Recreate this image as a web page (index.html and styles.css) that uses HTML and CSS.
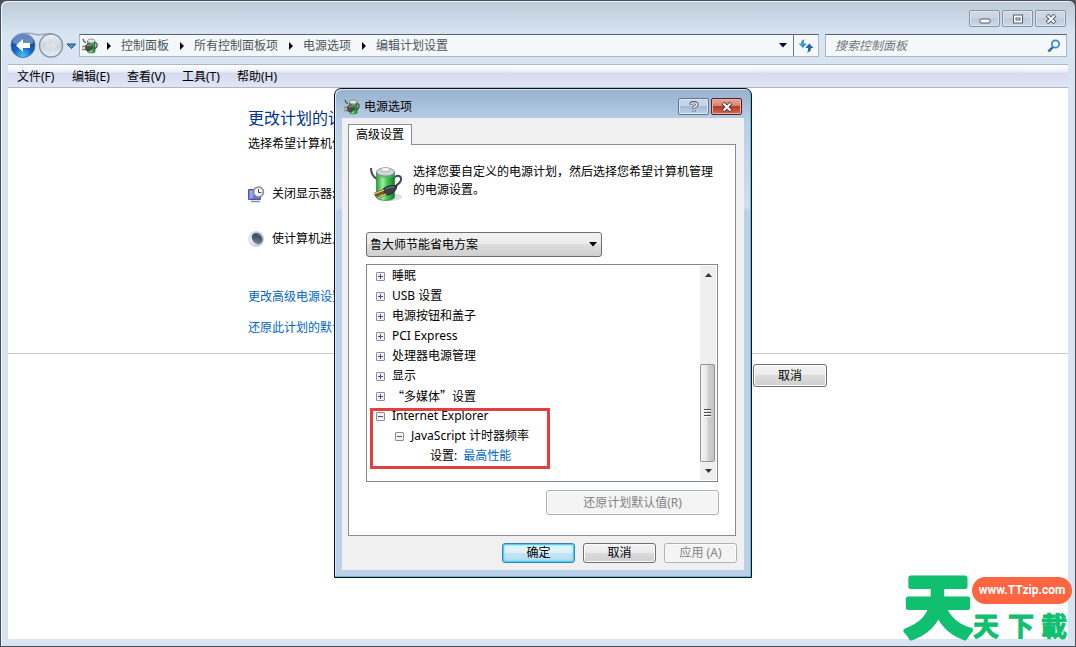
FILE: index.html
```html
<!DOCTYPE html>
<html lang="zh-CN">
<head>
<meta charset="utf-8">
<title>编辑计划设置</title>
<link rel="stylesheet" href="styles.css">
</head>
<body>
<svg class="defs" aria-hidden="true">
  <defs>
    <linearGradient id="green" x1="0" x2="1" y1="0" y2="0">
      <stop offset="0" stop-color="#2f9a3c"/><stop offset=".35" stop-color="#9af09a"/>
      <stop offset=".6" stop-color="#3fc653"/><stop offset="1" stop-color="#157a2a"/>
    </linearGradient>
    <radialGradient id="back" cx=".5" cy=".95" r=".9">
      <stop offset="0" stop-color="#3fd0ff"/><stop offset=".45" stop-color="#1a62c4"/><stop offset="1" stop-color="#123a8c"/>
    </radialGradient>
    <linearGradient id="fwd" x1="0" x2="0" y1="0" y2="1">
      <stop offset="0" stop-color="#eef2f6"/><stop offset=".5" stop-color="#ccd5df"/><stop offset="1" stop-color="#e6edf4"/>
    </linearGradient>
    <radialGradient id="moon" cx=".3" cy=".5" r=".7">
      <stop offset="0" stop-color="#ffffff"/><stop offset="1" stop-color="#a4b4cc"/>
    </radialGradient>
    <linearGradient id="night" x1="0" x2="1" y1="1" y2="0">
      <stop offset="0" stop-color="#8795ae"/><stop offset=".6" stop-color="#465064"/><stop offset="1" stop-color="#56627a"/>
    </linearGradient>
    <symbol id="power-small" viewBox="0 0 16 16">
      <path d="M5.500 3v10.500c0 2 7.500 2 7.500 0V3z" fill="url(#green)" stroke="#2b7a38" stroke-width=".7"/>
      <ellipse cx="9.200" cy="3" rx="3.800" ry="2" fill="#e3e8e6" stroke="#6d7773" stroke-width=".7"/>
      <path d="M13 4.500c3 .5 3 5-1 6.500M1 .8c.3 2 1 3 3 4" fill="none" stroke="#4a4d55" stroke-width="1.200"/>
      <path d="M3.500 7.500 8 5.500l2.500 2.500v2.500L7.500 13l-4-1z" fill="#4b4c50" stroke="#232427" stroke-width=".6"/>
      <path d="M5 8 8 6.800l1.500 1.200" fill="none" stroke="#aeb0b5"/>
      <path d="M0 8.500h3.500M0 11.500h3.500" stroke="#9c8344" stroke-width="1.400"/>
    </symbol>
  </defs>
</svg>

<main class="window">
  <header class="caption">
    <button class="cap-btn" aria-label="最小化"><svg width="12" height="10"><rect x="1" y="5" width="10" height="4" rx="1" fill="#fff" stroke="#555b6a"/></svg></button>
    <button class="cap-btn" aria-label="最大化"><svg width="12" height="10"><rect x="1.500" y="1" width="9" height="8" fill="#fff" stroke="#555b6a"/><rect x="4" y="4" width="4" height="2" fill="#fff" stroke="#555b6a"/></svg></button>
    <button class="cap-btn" aria-label="关闭"><svg width="12" height="10"><path d="m2 1 8 8M10 1 2 9" stroke="#555b6a" stroke-width="4"/><path d="m2.500 1.500 7 7M9.500 1.500l-7 7" stroke="#fff" stroke-width="2"/></svg></button>
  </header>

  <div class="toolbar">
    <svg class="travel" width="68" height="27" viewBox="0 0 68 27">
      <path d="M15 1.500c8-1 14 1.500 16 1.500s7-2 13-1" fill="none" stroke="#9eaab9" stroke-width="1.500"/>
      <circle cx="15" cy="13.500" r="12" fill="url(#back)" stroke="#5d6f8d"/>
      <path d="M4.500 11a10.500 10.500 0 0 1 21 0c-6 2-15 2-21 0z" fill="#a7bfe2" opacity=".55"/>
      <path d="m8 13.500 7-6.500v4h7v5h-7v4z" fill="#fff"/>
      <circle cx="43" cy="13.500" r="11.500" fill="url(#fwd)" stroke="#8492a4" stroke-width="1.400"/>
      <path d="m50 13.500-7-6v4h-6v4h6v4z" fill="#dde3e9" stroke="#ced5dd" stroke-width=".7"/>
      <path d="M59 12h8.500l-4 4.500z" fill="#4b9bdc" stroke="#28466f"/>
    </svg>
    <div class="address">
      <svg class="addr-icon" width="16" height="16"><use href="#power-small"/></svg>
      <nav class="crumbs" aria-label="位置">
        <i class="arrow"></i><a href="#">控制面板</a>
        <i class="arrow"></i><a href="#">所有控制面板项</a>
        <i class="arrow"></i><a href="#">电源选项</a>
        <i class="arrow"></i><a href="#">编辑计划设置</a>
      </nav>
      <button class="addr-btn" aria-label="历史位置"><svg width="8" height="5"><path d="M0 0h8L4 4.500z" fill="#00004a"/></svg></button>
      <button class="addr-btn refresh" aria-label="刷新"><svg width="16" height="14" viewBox="0 0 16 14"><path d="M6.500.5C3.500 1 3 2.500 3 4.500H.5L5 9l4-4.500H6c0-2 0-3 .5-4z" fill="#3f97d8"/><path d="M9 13.500c3.500-.5 4-2.500 4-4.500h2.500L11.300 4.500 7.300 9H10c0 2 0 3-1 4.500z" fill="#2864ac"/></svg></button>
    </div>
    <label class="search">
      <input type="search" placeholder="搜索控制面板" aria-label="搜索控制面板">
      <svg width="14" height="14" viewBox="0 0 14 14"><path d="m1.500 12.500 4.500-4.500" stroke="#2a5ea8" stroke-width="2.400"/><circle cx="8.500" cy="5" r="3.700" fill="#eef7fd" stroke="#3b86c8" stroke-width="1.700"/></svg>
    </label>
  </div>

  <div class="menubar">
    <button>文件(F)</button><button>编辑(E)</button><button>查看(V)</button><button>工具(T)</button><button>帮助(H)</button>
  </div>

  <section class="page">
    <div class="plan">
      <h1>更改计划的设</h1>
      <p>选择希望计算机使</p>
      <div class="option">
        <svg width="17" height="17" viewBox="0 0 17 17"><path d="M.5 3.500h12v10H.5z" fill="#6272cf" stroke="#4a55ae"/><path d="M1.500 4.500h5l-2 8h-3z" fill="#98a5ed"/><path d="M3 15.500h9" stroke="#8b8fa3" stroke-width="1.500"/><circle cx="10.500" cy="6" r="5" fill="#f3f5f7" stroke="#858c95" stroke-width="1.600"/><path d="M10.500 3v3.500h3" fill="none" stroke="#444b55"/></svg>
        <span>关闭显示器:</span>
      </div>
      <div class="option">
        <svg width="17" height="17" viewBox="0 0 17 17"><circle cx="8" cy="8" r="7.800" fill="url(#moon)"/><ellipse cx="9" cy="7.500" rx="4.800" ry="6" transform="rotate(-40 9 7.500)" fill="url(#night)"/></svg>
        <span>使计算机进入</span>
      </div>
      <a class="link first" href="#">更改高级电源设置</a>
      <a class="link" href="#">还原此计划的默认</a>
    </div>
    <div class="actions"><button class="btn page-cancel">取消</button></div>
  </section>
</main>

<section class="dialog" role="dialog" aria-labelledby="dialog-title">
  <header class="dialog-head">
    <svg width="16" height="16"><use href="#power-small"/></svg>
    <h2 id="dialog-title">电源选项</h2>
    <button class="cap-btn help" aria-label="帮助"><svg width="10" height="12" viewBox="0 0 10 12"><path d="M2 4V2.500Q2 1.500 5 1.500T8 3.500Q8 5 5 6v2M5 9v2" fill="none" stroke="#525a69" stroke-width="3"/><path d="M2 3.500Q2 1.800 5 1.800T7.800 3.500Q8 5 5 6.200v1.300M5 9.300v1.400" fill="none" stroke="#fff" stroke-width="1.300"/></svg></button>
    <button class="cap-btn close" aria-label="关闭"><svg width="12" height="10"><path d="m2 1 8 8M10 1 2 9" stroke="#5b3a42" stroke-width="4"/><path d="m2.500 1.500 7 7M9.500 1.500l-7 7" stroke="#fff" stroke-width="2"/></svg></button>
  </header>
  <div class="client">
    <div role="tablist"><button class="tab" role="tab" aria-selected="true">高级设置</button></div>
    <div class="panel" role="tabpanel">
      <div class="intro">
        <svg width="36" height="38" viewBox="0 0 36 38">
          <ellipse cx="21" cy="32" rx="12" ry="4" fill="#dcdcdc"/>
          <path d="M2 3c0 6 2 9 6 11M25 13c3-4 8-2 7 2-1 4-4 5-7 7" fill="none" stroke="#454b60" stroke-width="2"/>
          <path d="M7.500 7v25c0 4.500 18 4.500 18 0V7z" fill="url(#green)" stroke="#31893c" stroke-width=".8"/>
          <path d="M7.500 11c4 3 14 3 18 0V7h-18z" fill="#54b663" opacity=".6"/>
          <ellipse cx="16.500" cy="7" rx="9" ry="4" fill="#cfd6dc" stroke="#78838c" stroke-width=".8"/>
          <ellipse cx="16.500" cy="4.500" rx="4.500" ry="2" fill="#f6f8f9" stroke="#929ba3" stroke-width=".7"/>
          <path d="M14 24c3-3 9-4 14-3-1 5-4 8-10 9l-4-2z" fill="#3d3e48" stroke="#23242b"/>
          <path d="M17 24c3-2 6-2 8-2" fill="none" stroke="#878a98"/>
          <path d="m5 29 10-4M9 33l8-4M6 31l9-4" stroke="#73571f" stroke-width="2.400"/>
          <path d="m5 29 10-4M9 33l8-4" stroke="#f1d896" stroke-width="1.200"/>
        </svg>
        <p>选择您要自定义的电源计划，然后选择您希望计算机管理的电源设置。</p>
      </div>
      <div class="plan-select">
        <select aria-label="电源计划"><option>鲁大师节能省电方案</option></select>
        <svg width="8" height="5"><path d="M0 0h8L4 4.500z"/></svg>
      </div>
      <div class="tree-box">
        <ul class="tree">
          <li><button class="toggle plus" aria-label="展开"></button>睡眠</li>
          <li><button class="toggle plus" aria-label="展开"></button>USB 设置</li>
          <li><button class="toggle plus" aria-label="展开"></button>电源按钮和盖子</li>
          <li><button class="toggle plus" aria-label="展开"></button>PCI Express</li>
          <li><button class="toggle plus" aria-label="展开"></button>处理器电源管理</li>
          <li><button class="toggle plus" aria-label="展开"></button>显示</li>
          <li class="cjk"><button class="toggle plus" aria-label="展开"></button>“多媒体”设置</li>
          <li><button class="toggle" aria-label="折叠"></button>Internet Explorer</li>
          <li class="level2"><button class="toggle" aria-label="折叠"></button>JavaScript 计时器频率</li>
          <li class="level3">设置:<a class="value" href="#">最高性能</a></li>
        </ul>
        <div class="scroll">
          <button aria-label="向上滚动"><svg width="7" height="4"><path d="M0 4h7L3.500 0z" fill="#333"/></svg></button>
          <div class="thumb"><i></i><i></i><i></i></div>
          <button aria-label="向下滚动"><svg width="7" height="4"><path d="M0 0h7L3.500 4z" fill="#333"/></svg></button>
        </div>
        <div class="highlight"></div>
      </div>
      <button class="btn restore" disabled>还原计划默认值(R)</button>
    </div>
    <footer class="dialog-foot">
      <button class="btn default">确定</button>
      <button class="btn">取消</button>
      <button class="btn" disabled>应用 (A)</button>
    </footer>
  </div>
</section>

<div class="brand">
  <svg class="brand-big" width="68" height="72" viewBox="0 0 68 72"><text x="34" y="59" text-anchor="middle">天</text></svg>
  <div class="brand-side">
    <span class="brand-url">www.TTzip.com</span>
    <svg class="brand-small" width="98" height="33" viewBox="0 0 98 33"><text x="1" y="24">天</text><text x="36" y="24">下</text><text x="69" y="24">載</text></svg>
  </div>
</div>
</body>
</html>
```
FILE: styles.css
```css
* { box-sizing: border-box; }

body {
  margin: 0;
  background: #4c4f57;
  color: #000;
  font: 12px/18px "Noto Sans", "Noto Sans CJK SC", sans-serif;
}

button, input, select { font: inherit; color: inherit; margin: 0; padding: 0; }
button { border: 0; background: none; }
h1, h2, p, ul { margin: 0; padding: 0; font-weight: normal; }
a { color: #0066cc; text-decoration: none; }
svg { display: block; flex: none; }
.defs { position: absolute; width: 0; height: 0; }

/* Main window */
.window {
  display: flex;
  flex-direction: column;
  min-height: 100vh;
  padding: 0 7px 7px;
  border: 1px solid #4c4f57;
  border-radius: 7px 7px 0 0;
  background: linear-gradient(#bccad9, #d8e5f2 34px, #d8e4f1 70px);
  box-shadow: inset 1px 1px 0 #eef4fa;
}

.caption {
  display: flex;
  justify-content: flex-end;
  gap: 2px;
  height: 33px;
  padding: 9px 2px 0 0;
}

.cap-btn {
  display: grid;
  place-items: center;
  width: 31px;
  height: 17px;
  border: 1px solid #8593a7;
  border-radius: 2px;
  background: linear-gradient(#cbd7e4 50%, #bdcbda 50%, #cbd8e5);
  box-shadow: inset 0 0 0 1px #dde7f0;
}

.toolbar { display: flex; align-items: center; height: 23px; }
.travel { margin: 0 3px 0 0; }

.address, .search {
  display: flex;
  align-items: center;
  height: 23px;
  border: 1px solid #a9b5c1;
  border-top-color: #59626b;
  background: #f4f8fb;
}
.address { flex: 1; }
.addr-icon { margin-left: 2px; }
.crumbs { display: flex; align-items: center; flex: 1; padding-left: 9px; }
.crumbs a { color: #4c545c; }
.arrow {
  margin: 0 10px 0 11px;
  border: 4px solid transparent;
  border-left-color: #000;
  border-right: 0;
}
.crumbs .arrow:first-child { margin-left: 0; }
.addr-btn { display: grid; place-items: center; width: 20px; height: 21px; }
.refresh { width: 25px; border-left: 1px solid #707982; }
.search { width: 242px; margin: 0 1px 0 6px; padding: 0 5px 0 9px; }
.search input { flex: 1; min-width: 0; border: 0; outline: 0; background: none; }
.search input::placeholder { color: #6e757c; font-style: italic; opacity: 1; }

.menubar {
  display: flex;
  gap: 1px;
  height: 24px;
  margin-top: 7px;
  padding: 2px 0 0 1px;
  border-top: 1px solid #adb9c6;
  border-bottom: 1px solid #adb6ca;
  background: linear-gradient(#fff, #e9edf7 7px, #d5daed 8px, #e1e5f5);
}
.menubar button { width: 54px; padding-left: 8px; text-align: left; white-space: nowrap; }

.page { flex: 1; background: #fff; }
.plan {
  display: flex;
  flex-direction: column;
  align-items: flex-start;
  height: 266px;
  padding: 18px 0 0 240px;
  border-bottom: 1px solid #ccc;
}
.plan h1 { font-size: 16px; line-height: 24px; color: #003399; }
.plan p { margin-top: 5px; margin-bottom: 32px; }
.option { display: flex; align-items: center; gap: 7px; height: 18px; margin-bottom: 27px; }
.link.first { margin: 13px 0; }
.actions { padding: 10px 0 0 745px; }

/* Push buttons */
.btn {
  width: 73px;
  height: 20px;
  border: 1px solid #707070;
  border-radius: 3px;
  background: linear-gradient(#f3f3f3, #ebebeb 50%, #dcdcdc 50%, #cfcfcf);
  box-shadow: inset 0 0 0 1px #fbfbfb;
  line-height: 18px;
}
.btn.page-cancel { width: 74px; height: 23px; }
.btn.default {
  border-color: #3c7fb1;
  background: linear-gradient(#eaf5fb, #dceffa 50%, #c5e4f5 50%, #b4dcf2);
  box-shadow: inset 0 0 0 1px #48d0f5, inset 0 0 2px 1px #48d0f5;
}
.btn:disabled { border-color: #adb2b5; background: #f4f4f4; color: #838383; }

/* Power options dialog */
.dialog {
  position: absolute;
  left: 334px;
  top: 88px;
  width: 418px;
  padding: 0 7px 7px;
  border: 1px solid #0a1016;
  border-radius: 7px 7px 0 0;
  background: linear-gradient(#97b0cd, #b8cfe8 32px, #cfdfef 118px, #b9d1ea 122px);
  box-shadow: inset -1px -1px 0 #4fc4d6, inset 1px 1px 0 #dbe8f4;
}
.dialog-head { display: flex; align-items: center; height: 29px; padding: 6px 2px 0 2px; }
.dialog-head h2 { flex: 1; margin-left: 4px; font-size: 12px; }
.cap-btn.help { margin-right: 2px; background: linear-gradient(#c6d6e9 50%, #a3bbd6 50%, #bdd2e8); border-color: #64758e; }
.cap-btn.close {
  border-color: #55202a;
  background: linear-gradient(#e5a596, #d7806d 50%, #b93a24 50%, #cf6b4f);
  box-shadow: inset 0 0 0 1px #e6b0a4;
}
.client { padding: 6px 8px 7px 6px; background: #f0f0f0; }
[role="tablist"] { display: flex; height: 20px; }
.tab {
  position: relative;
  z-index: 1;
  width: 64px;
  height: 21px;
  border: 1px solid #898c95;
  border-bottom: 0;
  background: #fff;
}
.panel {
  display: flex;
  flex-direction: column;
  height: 392px;
  padding: 17px 17px 20px;
  border: 1px solid #898c95;
  background: #fff;
}
.intro { display: flex; gap: 8px; height: 71px; padding-left: 3px; }
.intro svg { margin-top: 3px; }
.intro p { width: 302px; font-family: "Noto Sans CJK SC", sans-serif; }

.plan-select { display: flex; align-items: center; width: 236px; }
.plan-select select {
  appearance: none;
  flex: 1;
  height: 25px;
  padding: 1px 0 0 3px;
  border: 1px solid #707070;
  border-radius: 3px;
  background: linear-gradient(#f2f2f2, #ebebeb 50%, #dddddd 50%, #cfcfcf);
}
.plan-select svg { margin-left: -13px; margin-right: 5px; pointer-events: none; }

.tree-box {
  position: relative;
  display: flex;
  flex: none;
  height: 218px;
  margin-top: 7px;
  padding: 1px;
  border: 1px solid #828790;
}
.tree { flex: 1; list-style: none; }
.tree li { display: flex; align-items: center; height: 20px; padding-left: 8px; white-space: pre; }
.tree .cjk { font-family: "Noto Sans CJK SC", sans-serif; }
.tree .level2 { padding-left: 27px; }
.tree .level3 { padding-left: 62px; }
.value { margin-left: 6px; }
.toggle {
  width: 9px;
  height: 9px;
  margin-right: 7px;
  border: 1px solid #8f8f8f;
  border-radius: 1px;
  background: linear-gradient(#3c4f9a, #3c4f9a) center / 5px 1px no-repeat, #f2f2f2;
}
.toggle.plus {
  background:
    linear-gradient(#3c4f9a, #3c4f9a) center / 5px 1px no-repeat,
    linear-gradient(#3c4f9a, #3c4f9a) center / 1px 5px no-repeat,
    #f2f2f2;
}

.scroll {
  display: flex;
  flex-direction: column;
  width: 16px;
  background: #efefef;
}
.scroll button { display: grid; place-items: center; width: 16px; height: 18px; }
.thumb {
  display: flex;
  flex-direction: column;
  align-items: center;
  justify-content: center;
  gap: 1px;
  width: 15px;
  height: 98px;
  margin-top: auto;
  border: 1px solid #959595;
  border-radius: 2px;
  background: linear-gradient(90deg, #f6f6f6, #e8e8e8 45%, #d0d0d0 55%, #c4c4c4);
}
.thumb i { width: 7px; height: 2px; border-top: 1px solid #4b4b4b; background: #fff; }

.highlight {
  position: absolute;
  left: 3px;
  top: 143px;
  width: 180px;
  height: 61px;
  border: 3px solid #e43f3f;
  pointer-events: none;
}
.restore { align-self: flex-end; flex: none; width: 173px; height: 25px; margin: 8px -1px 0 0; }
.dialog-foot { display: flex; justify-content: flex-end; gap: 8px; margin-right: -1px; padding-top: 7px; }

/* Brand mark */
.brand {
  position: absolute;
  right: 4px;
  bottom: 2px;
  display: flex;
  align-items: flex-end;
}
.brand svg { overflow: visible; }
.brand text {
  fill: #10c070;
  stroke: #10c070;
  stroke-linejoin: round;
  font-family: "Noto Sans CJK TC", sans-serif;
  font-weight: 700;
}
.brand-big { font-size: 68px; stroke-width: 5px; }
.brand-small { font-size: 26px; stroke-width: 1px; margin-top: 8px; }
.brand-side { display: flex; flex-direction: column; width: 100px; }
.brand-url {
  height: 27px;
  border-radius: 14px;
  background: #ff6540;
  color: #fff;
  font: bold 12px/27px Roboto, sans-serif;
  text-align: center;
}
```
